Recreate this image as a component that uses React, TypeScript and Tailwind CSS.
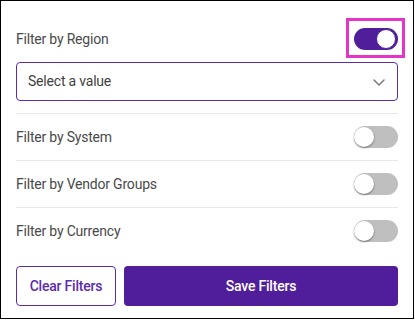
import React from "react";

const font = { fontFamily: "Roboto, 'Noto Sans', sans-serif" };

function Toggle({ on }: { on?: boolean }) {
  return (
    <div
      className={
        "relative w-[44px] h-[22px] rounded-full " +
        (on ? "bg-[#501e9a]" : "bg-[#bfbfbf]")
      }
    >
      <div
        className={
          "absolute top-[1px] w-[20px] h-[20px] rounded-full bg-white " +
          (on
            ? "right-[2px] border border-[#501e9a]"
            : "left-0 shadow-[0_1px_2px_rgba(0,0,0,0.45)]")
        }
      />
    </div>
  );
}

function Row({ label }: { label: string }) {
  return (
    <div className="h-[47px] border-t border-[#e8e8e8] flex items-center justify-between">
      <span className="text-[14px] text-[#4a4a4a] tracking-[-0.2px]">{label}</span>
      <Toggle />
    </div>
  );
}

export default function App() {
  return (
    <div
      style={font}
      className="w-[414px] h-[319px] border border-black bg-white px-[15px] pt-[16px] flex flex-col"
    >
      <div className="h-[44px] flex items-center justify-between">
        <span className="text-[14px] text-[#4a4a4a] tracking-[-0.2px]">Filter by Region</span>
        <div className="relative">
          <Toggle on />
          <div className="absolute -left-[8px] -top-[10px] w-[59px] h-[40px] border-[3px] border-[#e535c9]" />
        </div>
      </div>
      <div className="mt-[1px] h-[39px] border border-[#5b2bb0] rounded-[4px] flex items-center justify-between pl-[11px] pr-[11px]">
        <span className="text-[14px] text-[#3f3f3f] tracking-[-0.2px]">Select a value</span>
        <svg width="14" height="14" viewBox="0 0 14 14" fill="none">
          <path d="M2 5 L7 10 L12 5" stroke="#7a7a7a" strokeWidth="1.5" strokeLinecap="round" strokeLinejoin="round" />
        </svg>
      </div>
      <div className="mt-[12px]">
        <Row label="Filter by System" />
        <Row label="Filter by Vendor Groups" />
        <Row label="Filter by Currency" />
      </div>
      <div className="mt-[12px] flex gap-[8px]">
        <button className="w-[100px] h-[40px] border border-[#5b2bb0] rounded-[4px] text-[14px] font-medium text-[#5b2bb0] tracking-[-0.2px]">
          Clear Filters
        </button>
        <button className="flex-1 h-[40px] bg-[#501e9a] rounded-[4px] text-[14px] font-medium text-white tracking-[-0.2px]">
          Save Filters
        </button>
      </div>
    </div>
  );
}
